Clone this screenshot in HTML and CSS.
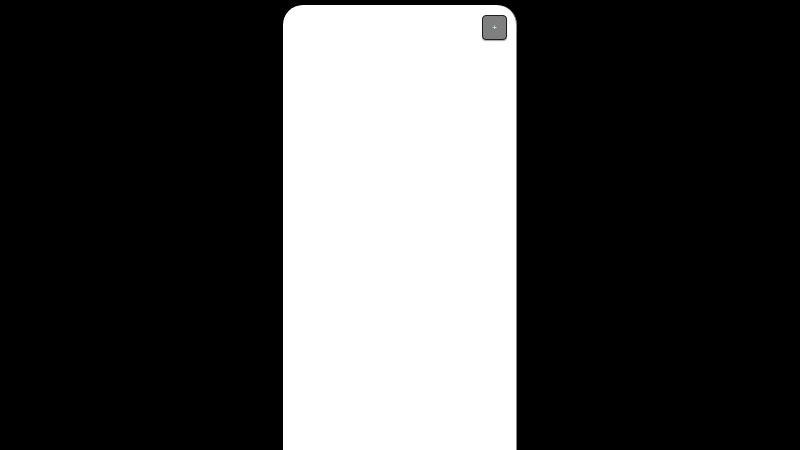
FILE: index.html
```
<!DOCTYPE html>
<html lang="en">
<head>
<meta charset="utf-8">
<title>Panel</title>
<link rel="stylesheet" href="styles.css">
</head>
<body>
<main class="screen">
  <section class="phone">
    <header class="phone-top">
      <button class="add-btn" type="button" aria-label="Add">+</button>
    </header>
  </section>
</main>
</body>
</html>
```
FILE: styles.css
```
html, body {
  margin: 0;
  padding: 0;
  background: #000;
  height: 100%;
  overflow: hidden;
  font-family: "Liberation Sans", Arial, sans-serif;
}
.screen {
  display: flex;
  justify-content: center;
  padding-top: 5px;
}
.phone {
  width: 233px;
  height: 445px;
  background: #fff;
  border-right: 1px solid #8a8a8a;
  border-radius: 20px 20px 0 0;
  box-sizing: content-box;
}
.phone-top {
  display: flex;
  justify-content: flex-end;
  padding: 10px 9px 0 0;
}
.add-btn {
  width: 25px;
  height: 25px;
  padding: 0;
  margin: 0;
  background: #7f7f7f;
  border: 1px solid #1e1e1e;
  border-radius: 4px;
  box-shadow: 0 1px 1px rgba(0,0,0,0.35);
  color: #f0f0f0;
  font-family: "Liberation Sans", Arial, sans-serif;
  font-size: 8px;
  line-height: 23px;
  text-align: center;
}
```
